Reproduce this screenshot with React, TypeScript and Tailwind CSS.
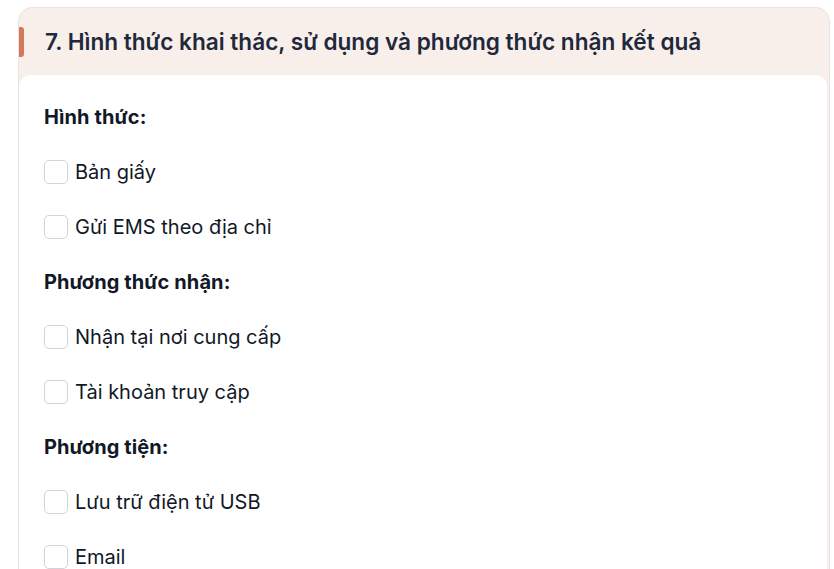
import React from "react";

const Check = ({ label }: { label: string }) => (
  <div className="h-[55px] flex items-center gap-[7px]">
    <div className="w-[24px] h-[24px] rounded-[5px] border border-[#d4d4d8] bg-white shrink-0" />
    <span className="text-[20px] text-[#111827] leading-none">{label}</span>
  </div>
);

const Heading = ({ label }: { label: string }) => (
  <div className="h-[55px] flex items-center">
    <span className="text-[20px] font-bold text-[#111827] leading-none tracking-[0.1px]">{label}</span>
  </div>
);

export default function App() {
  return (
    <div className="w-[834px] h-[569px] bg-white overflow-hidden pt-[7px] pl-[18px] pr-[4px]" style={{ fontFamily: "Inter, 'Noto Sans', sans-serif" }}>
      <div className="rounded-[14px] border border-[#e7e5e4] bg-[#f9efea] h-[600px] overflow-hidden">
        <div className="relative h-[67px] flex items-center pl-[26px]">
          <div className="absolute left-0 top-[19px] w-[5px] h-[30px] rounded-r-[3px] bg-[#d4785a]" />
          <h2 className="text-[22.6px] font-semibold text-[#1e293b]">
            7. Hình thức khai thác, sử dụng và phương thức nhận kết quả
          </h2>
        </div>
        <div className="bg-white rounded-t-[12px] h-full pl-[25px] pt-[14px] mr-[2px]">
          <Heading label="Hình thức:" />
          <Check label="Bản giấy" />
          <Check label="Gửi EMS theo địa chỉ" />
          <Heading label="Phương thức nhận:" />
          <Check label="Nhận tại nơi cung cấp" />
          <Check label="Tài khoản truy cập" />
          <Heading label="Phương tiện:" />
          <Check label="Lưu trữ điện tử USB" />
          <Check label="Email" />
        </div>
      </div>
    </div>
  );
}
